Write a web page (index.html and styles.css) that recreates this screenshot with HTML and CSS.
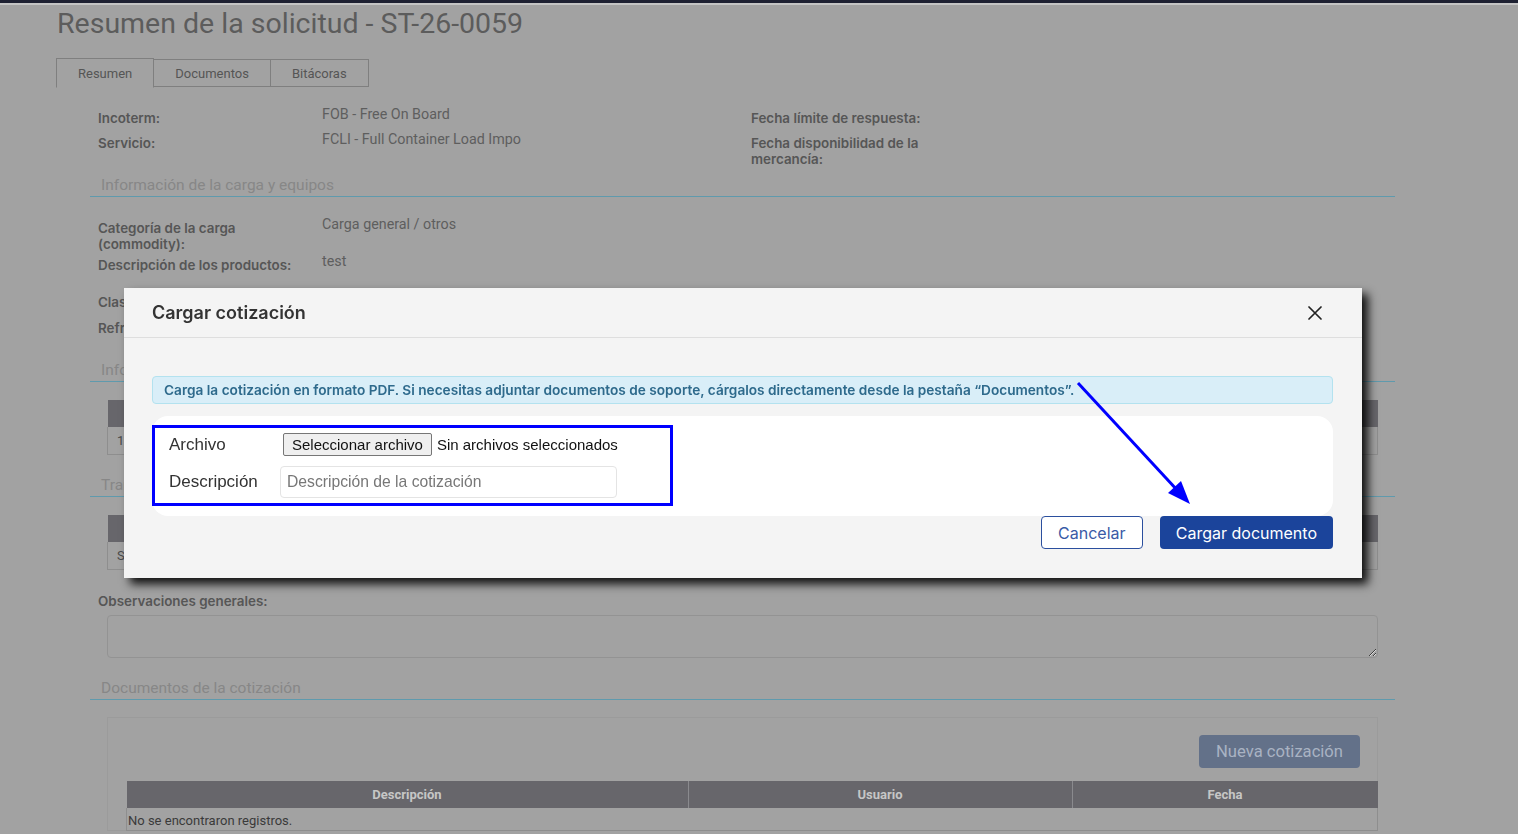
FILE: index.html
```html
<!DOCTYPE html>
<html>
<head>
    <meta charset="utf-8">
    <meta name="viewport" content="width=device-width, initial-scale=1">
    <title>Resumen de la solicitud - ST-26-0059</title>
    <link rel="stylesheet" href="styles.css">
</head>
<body>
    <div class="topbar"></div>

    <div class="page">
        <h1 class="page-title">Resumen de la solicitud - ST-26-0059</h1>

        <ul class="tabs">
            <li class="tab active">Resumen</li>
            <li class="tab">Documentos</li>
            <li class="tab">Bitácoras</li>
        </ul>

        <div class="tab-pane">
            <div class="summary-grid">
                <div class="lbl">Incoterm:</div>
                <div class="val">FOB - Free On Board</div>
                <div class="lbl">Fecha límite de respuesta:</div>
                <div class="val"></div>

                <div class="lbl">Servicio:</div>
                <div class="val">FCLI - Full Container Load Impo</div>
                <div class="lbl narrow">Fecha disponibilidad de la mercancía:</div>
                <div class="val"></div>
            </div>

            <div class="section-title first">Información de la carga y equipos</div>

            <div class="summary-grid cargo">
                <div class="lbl narrow">Categoría de la carga (commodity):</div>
                <div class="val">Carga general / otros</div>
                <div></div><div></div>

                <div class="lbl">Descripción de los productos:</div>
                <div class="val">test</div>
                <div></div><div></div>

                <div class="lbl spaced">Clasificación:</div>
                <div class="val spaced">General</div>
                <div></div><div></div>

                <div class="lbl spaced-sm">Refrigerada:</div>
                <div class="val spaced-sm">No</div>
                <div></div><div></div>
            </div>

            <div class="section-title">Información de equipos</div>
            <table class="grid-table small">
                <thead><tr><th>Cantidad</th><th>Tipo de equipo</th><th>Peso</th></tr></thead>
                <tbody><tr><td>1</td><td>40' HC</td><td>20000</td></tr></tbody>
            </table>

            <div class="section-title">Transporte</div>
            <table class="grid-table small">
                <thead><tr><th>Servicio</th><th>Origen</th><th>Destino</th></tr></thead>
                <tbody><tr><td>Sin transporte</td><td></td><td></td></tr></tbody>
            </table>

            <div class="lbl obs-label">Observaciones generales:</div>
            <textarea class="obs-input"></textarea>

            <div class="section-title">Documentos de la cotización</div>
            <div class="docs-panel">
                <div class="docs-actions">
                    <button class="btn-new">Nueva cotización</button>
                </div>
                <table class="grid-table docs">
                    <thead>
                        <tr><th class="c-desc">Descripción</th><th class="c-user">Usuario</th><th>Fecha</th></tr>
                    </thead>
                    <tbody>
                        <tr><td colspan="3" class="empty">No se encontraron registros.</td></tr>
                    </tbody>
                </table>
            </div>
        </div>
    </div>

    <!-- modal de carga -->
    <div class="modal">
        <div class="modal-header">
            <span class="modal-title">Cargar cotización</span>
            <span class="modal-close">
                <svg width="14" height="14" viewBox="0 0 14 14"><path d="M1 1 L13 13 M13 1 L1 13" stroke="#222" stroke-width="1.7" stroke-linecap="round"/></svg>
            </span>
        </div>
        <div class="modal-body">
            <div class="alert-info">Carga la cotización en formato PDF. Si necesitas adjuntar documentos de soporte, cárgalos directamente desde la pestaña “Documentos”.</div>
            <div class="form-card">
                <div class="form-box">
                    <div class="form-row">
                        <label class="form-label">Archivo</label>
                        <div class="file-pick">
                            <button class="file-btn">Seleccionar archivo</button>
                            <span class="file-name">Sin archivos seleccionados</span>
                        </div>
                    </div>
                    <div class="form-row">
                        <label class="form-label">Descripción</label>
                        <input class="form-input" type="text" placeholder="Descripción de la cotización">
                    </div>
                </div>
            </div>
            <div class="modal-footer">
                <button class="btn btn-outline">Cancelar</button>
                <button class="btn btn-primary">Cargar documento</button>
            </div>
        </div>
    </div>

    <svg class="pointer" viewBox="0 0 1518 834" width="1518" height="834">
        <line x1="1078" y1="383" x2="1178" y2="491" stroke="#0000ff" stroke-width="3"/>
        <polygon points="1190,504 1168,493 1181,481" fill="#0000ff"/>
    </svg>
</body>
</html>
```

FILE: styles.css
```css
body, html {
    margin: 0;
    padding: 0;
    width: 100%;
    height: 100%;
    overflow: hidden;
}

body {
    background: #a2a2a2;
    font-family: Roboto, "Liberation Sans", sans-serif;
    color: #5a5a5a;
}

.topbar {
    height: 3px;
    background: #1e2132;
    border-bottom: 2px solid #c4c4c4;
}

.page {
    width: 1339px;
    padding-left: 56px;
}

.page-title {
    margin: 3px 0 0 1px;
    font-size: 28.5px;
    font-weight: 400;
    line-height: 32px;
    color: #5c5c5c;
}

/* pestañas */
.tabs {
    display: flex;
    list-style: none;
    margin: 19px 0 0;
    padding: 0;
}

.tab {
    height: 26px;
    line-height: 27px;
    padding: 0 21px;
    font-size: 13px;
    color: #555;
    border: 1px solid #7f7f7f;
    border-left: none;
}

.tab.active {
    border-left: 1px solid #7f7f7f;
    border-bottom-color: #a2a2a2;
    margin-top: -1px;
    height: 27px;
    padding-top: 1px;
}

.tab-pane {
    margin-left: 34px;
    padding-top: 18px;
}

/* datos de resumen */
.summary-grid {
    display: grid;
    grid-template-columns: 224px 429px 175px 1fr;
    row-gap: 5px;
    padding-left: 8px;
}

.lbl {
    font-family: Inter, "Liberation Sans", sans-serif;
    font-size: 13.4px;
    font-weight: 600;
    line-height: 16px;
    color: #565656;
    padding-top: 4px;
}

.lbl.narrow {
    width: 175px;
}

.val {
    font-size: 14.3px;
    line-height: 16px;
    color: #5e5e5e;
}

.spaced {
    margin-top: 16px;
}

.spaced-sm {
    margin-top: 5px;
}

.section-title {
    margin-top: 21px;
    padding: 0 0 2px 11px;
    font-size: 15.5px;
    line-height: 18px;
    color: #878787;
    border-bottom: 1px solid #5f9aad;
}

.section-title.first {
    margin-top: 9px;
}

.summary-grid.cargo {
    margin-top: 19px;
    row-gap: 1px;
}

.summary-grid.cargo + .section-title {
    margin-top: 25px;
}

/* tablas */
.grid-table {
    border-collapse: collapse;
    font-size: 13px;
}

.grid-table.small {
    width: 1271px;
    margin: 18px 0 0 17px;
}

.grid-table th {
    background: #67666b;
    color: #c6c6c6;
    font-weight: 700;
    height: 27px;
    padding: 0;
    border-left: 1px solid #8a8a8e;
}

.grid-table th:first-child {
    border-left: none;
}

.grid-table td {
    height: 27px;
    padding: 0 9px;
    color: #4a4a4a;
    border: 1px solid #8e8e8e;
    border-top: none;
}

.obs-label {
    margin: 19px 0 0 8px;
}

.obs-input {
    display: block;
    box-sizing: border-box;
    width: 1271px;
    height: 43px;
    margin: 6px 0 0 17px;
    background: transparent;
    border: 1px solid #939393;
    border-radius: 4px;
}

.docs-panel {
    box-sizing: border-box;
    width: 1271px;
    height: 114px;
    margin: 17px 0 0 17px;
    padding: 17px 0 0 18px;
    border: 1px solid #9b9b9b;
}

.docs-actions {
    display: flex;
    justify-content: flex-end;
    padding-right: 17px;
}

.btn-new {
    height: 33px;
    padding: 0 17px;
    background: #637189;
    color: #a9b3c3;
    font-family: Roboto, sans-serif;
    font-size: 16.6px;
    border: none;
    border-radius: 4px;
}

.grid-table.docs {
    width: 1252px;
    margin-top: 13px;
}

.grid-table.docs .c-desc { width: 561px; }
.grid-table.docs .c-user { width: 383px; }

.grid-table td.empty {
    height: 19px;
    padding: 3px 1px 0;
    color: #3a3a3a;
}

/* modal */
.modal {
    position: fixed;
    left: 124px;
    top: 288px;
    width: 1238px;
    height: 290px;
    background: #f4f4f4;
    box-shadow: 6px 6px 9px rgba(0, 0, 0, 0.9);
    font-family: Inter, "Liberation Sans", sans-serif;
}

.modal-header {
    display: flex;
    justify-content: space-between;
    align-items: center;
    height: 49px;
    padding: 0 40px 0 28px;
    border-bottom: 1px solid #dedede;
}

.modal-title {
    font-size: 18px;
    font-weight: 600;
    color: #333;
}

.modal-close {
    display: flex;
    margin-top: 1px;
}

.modal-body {
    padding: 38px 29px 0 28px;
}

.alert-info {
    height: 26px;
    line-height: 26px;
    padding: 0 11px;
    background: #d9eef8;
    border: 1px solid #b3e2ef;
    border-radius: 4px;
    font-size: 13.65px;
    font-weight: 600;
    color: #2e6a8c;
    white-space: nowrap;
}

.form-card {
    margin-top: 12px;
    height: 100px;
    padding-top: 9px;
    box-sizing: border-box;
    background: #fff;
    border-radius: 16px;
}

.form-box {
    width: 515px;
    padding: 5px 0 5px;
    border: 3px solid #0000ff;
    font-family: "Liberation Sans", Arial, sans-serif;
}

.form-row {
    display: flex;
    align-items: center;
}

.form-row + .form-row {
    margin-top: 10px;
}

.form-label {
    width: 111px;
    padding-left: 14px;
    font-size: 17px;
    color: #333;
}

.file-pick {
    display: flex;
    align-items: center;
    margin-left: 3px;
}

.file-btn {
    height: 23px;
    padding: 0 8px;
    background: #efefef;
    border: 1px solid #767676;
    border-radius: 2px;
    font-family: "Liberation Sans", Arial, sans-serif;
    font-size: 15px;
    color: #111;
}

.file-name {
    margin-left: 5px;
    font-size: 15px;
    color: #111;
}

.form-input {
    box-sizing: border-box;
    width: 337px;
    height: 32px;
    padding: 0 6px;
    border: 1px solid #e4e4e4;
    border-radius: 4px;
    font-family: "Liberation Sans", Arial, sans-serif;
    font-size: 15.7px;
}

.form-input::placeholder {
    color: #777;
}

.modal-footer {
    display: flex;
    justify-content: flex-end;
    gap: 17px;
}

.btn {
    height: 33px;
    padding: 0 16px;
    font-family: Inter, sans-serif;
    font-size: 16px;
    border-radius: 4px;
}

.btn-outline {
    width: 102px;
    background: #fff;
    color: #3a5aa6;
    border: 1px solid #2b4f9e;
}

.btn-primary {
    background: #1b449b;
    color: #fff;
    border: none;
}

.pointer {
    position: fixed;
    left: 0;
    top: 0;
    pointer-events: none;
}
```
